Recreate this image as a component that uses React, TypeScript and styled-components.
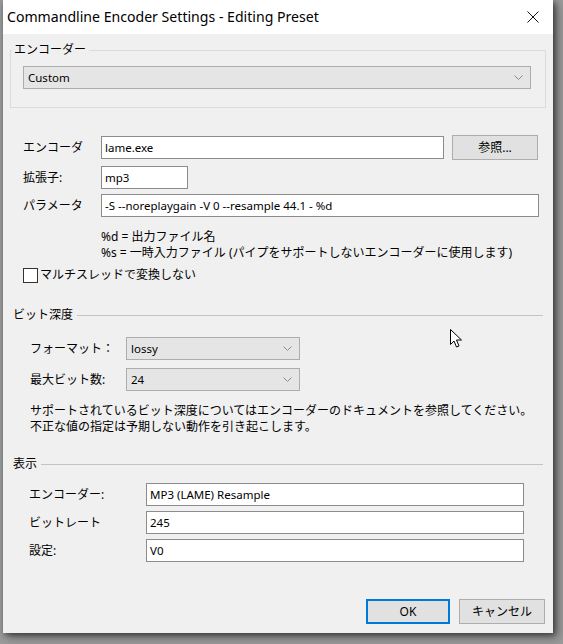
import React from "react";
import styled, { createGlobalStyle } from "styled-components";

const FONT = `"Segoe UI", "Noto Sans", "Noto Sans CJK JP", sans-serif`;

const Global = createGlobalStyle`
  html, body { margin: 0; padding: 0; }
  body {
    background: #9b9b9b;
    width: 563px;
    height: 644px;
    overflow: hidden;
    font-family: ${FONT};
    font-size: 12px;
    color: #000;
  }
`;

const Screen = styled.div`
  width: 563px;
  height: 644px;
  padding-left: 3px;
  box-sizing: border-box;
  background: #9b9b9b;
`;

const Window = styled.div`
  position: relative;
  width: 550px;
  height: 633px;
  background: #f0f0f0;
  display: flex;
  flex-direction: column;
  box-shadow: 2px 2px 6px rgba(0, 0, 0, 0.55), 5px 5px 10px rgba(0, 0, 0, 0.25);
`;

const TitleBar = styled.div`
  height: 34px;
  background: #fff;
  display: flex;
  align-items: center;
  padding-left: 4px;
  padding-bottom: 1px;
  box-sizing: border-box;
`;

const TitleText = styled.div`
  flex: 1;
  font-family: "Segoe UI", "Noto Sans", sans-serif;
  font-size: 14.1px;
  color: #000;
`;

const CloseBtn = styled.div`
  width: 40px;
  height: 34px;
  display: flex;
  align-items: center;
  justify-content: center;
`;

const Content = styled.div`
  flex: 1;
  display: flex;
  flex-direction: column;
  padding: 0 7px 9px 7px;
`;

const GroupBox = styled.div`
  margin-top: 16px;
  height: 58px;
  box-sizing: border-box;
  border: 1px solid #dcdcdc;
  display: flex;
  flex-direction: column;
  padding: 0 14px 0 12px;
`;

const Legend = styled.span`
  align-self: flex-start;
  margin: -9px 0 0 -11px;
  padding: 0 3px 0 2px;
  line-height: 16px;
  background: #f0f0f0;
`;

const Combo = styled.div<{ $w?: number }>`
  height: 23px;
  box-sizing: border-box;
  ${(p) => (p.$w ? `width: ${p.$w}px;` : "")}
  background: #e5e5e5;
  border: 1px solid #adadad;
  display: flex;
  align-items: center;
  padding: 0 7px 0 4px;
  line-height: 16px;
  font-size: 11.5px;
`;

const ComboText = styled.span`
  flex: 1;
`;

const GroupCombo = styled(Combo)`
  margin-top: 8px;
`;

const Row = styled.div<{ $top: number; $indent?: number }>`
  display: flex;
  align-items: center;
  margin-top: ${(p) => p.$top}px;
  margin-left: ${(p) => p.$indent ?? 13}px;
`;

const Label = styled.span<{ $w: number }>`
  width: ${(p) => p.$w}px;
  flex: none;
  line-height: 16px;
`;

const Input = styled.div<{ $w: number }>`
  width: ${(p) => p.$w}px;
  height: 23px;
  box-sizing: border-box;
  background: #fff;
  border: 1px solid #8c8c8c;
  display: flex;
  align-items: center;
  padding-left: 3px;
  line-height: 16px;
  font-size: 11.5px;
  white-space: nowrap;
`;

const Button = styled.div<{ $w: number; $default?: boolean }>`
  width: ${(p) => p.$w}px;
  height: 25px;
  box-sizing: border-box;
  background: #e1e1e1;
  border: ${(p) => (p.$default ? "2px solid #0078d7" : "1px solid #adadad")};
  display: flex;
  align-items: center;
  justify-content: center;
  line-height: 16px;
`;

const BrowseButton = styled(Button)`
  margin-left: 8px;
`;

const Help = styled.div<{ $top: number; $indent: number }>`
  margin-top: ${(p) => p.$top}px;
  margin-left: ${(p) => p.$indent}px;
  line-height: 16px;
  white-space: nowrap;
`;

const CheckRow = styled.label`
  display: flex;
  align-items: center;
  margin-top: 6px;
  margin-left: 13px;
  line-height: 16px;
`;

const CheckBox = styled.span`
  width: 13px;
  height: 13px;
  border: 1px solid #333;
  background: #fff;
  margin-right: 2px;
`;

const Separator = styled.div<{ $top: number }>`
  display: flex;
  align-items: center;
  margin-top: ${(p) => p.$top}px;
  margin-left: 3px;
  margin-right: 3px;
  line-height: 16px;
  &::after {
    content: "";
    flex: 1;
    height: 1px;
    background: #c4c4c4;
    margin-left: 4px;
  }
`;

const Buttons = styled.div`
  margin-top: auto;
  display: flex;
  justify-content: flex-end;
  gap: 9px;
  padding-right: 1px;
`;

const Cursor = styled.svg`
  position: absolute;
  left: 447px;
  top: 329px;
`;

const Chevron = () => (
  <svg width="9" height="5" viewBox="0 0 9 5">
    <path d="M0.5 0.5 L4.5 4.5 L8.5 0.5" fill="none" stroke="#8a8a8a" strokeWidth="1" />
  </svg>
);

export default function App() {
  return (
    <>
      <Global />
      <Screen>
        <Window>
          <TitleBar>
            <TitleText>Commandline Encoder Settings - Editing Preset</TitleText>
            <CloseBtn>
              <svg width="12" height="12" viewBox="0 0 12 12">
                <path d="M0.5 0.5 L11.5 11.5 M11.5 0.5 L0.5 11.5" stroke="#111" strokeWidth="1" />
              </svg>
            </CloseBtn>
          </TitleBar>
          <Content>
            <GroupBox>
              <Legend>エンコーダー</Legend>
              <GroupCombo>
                <ComboText>Custom</ComboText>
                <Chevron />
              </GroupCombo>
            </GroupBox>

            <Row $top={27}>
              <Label $w={78}>エンコーダ</Label>
              <Input $w={343}>lame.exe</Input>
              <BrowseButton $w={86}>参照...</BrowseButton>
            </Row>
            <Row $top={6}>
              <Label $w={78}>拡張子:</Label>
              <Input $w={87}>mp3</Input>
            </Row>
            <Row $top={5}>
              <Label $w={78}>パラメータ</Label>
              <Input $w={438}>-S --noreplaygain -V 0 --resample 44.1 - %d</Input>
            </Row>
            <Help $top={12} $indent={91}>
              %d = 出力ファイル名
              <br />
              %s = 一時入力ファイル (パイプをサポートしないエンコーダーに使用します)
            </Help>
            <CheckRow>
              <CheckBox />
              マルチスレッドで変換しない
            </CheckRow>

            <Separator $top={24}>ビット深度</Separator>
            <Row $top={14} $indent={20}>
              <Label $w={96}>フォーマット：</Label>
              <Combo $w={174}>
                <ComboText>lossy</ComboText>
                <Chevron />
              </Combo>
            </Row>
            <Row $top={8} $indent={20}>
              <Label $w={96}>最大ビット数:</Label>
              <Combo $w={174}>
                <ComboText>24</ComboText>
                <Chevron />
              </Combo>
            </Row>
            <Help $top={12} $indent={20}>
              サポートされているビット深度についてはエンコーダーのドキュメントを参照してください。
              <br />
              不正な値の指定は予期しない動作を引き起こします。
            </Help>

            <Separator $top={21}>表示</Separator>
            <Row $top={11} $indent={19}>
              <Label $w={117}>エンコーダー:</Label>
              <Input $w={378}>MP3 (LAME) Resample</Input>
            </Row>
            <Row $top={5} $indent={19}>
              <Label $w={117}>ビットレート</Label>
              <Input $w={378}>245</Input>
            </Row>
            <Row $top={5} $indent={19}>
              <Label $w={117}>設定:</Label>
              <Input $w={378}>V0</Input>
            </Row>

            <Buttons>
              <Button $w={84} $default>OK</Button>
              <Button $w={86}>キャンセル</Button>
            </Buttons>
          </Content>
          <Cursor width="12" height="19" viewBox="0 0 12 19">
            <path
              d="M0.5 0.5 L0.5 15.5 L4 12 L6.5 18 L9 17 L6.5 11 L11.5 11 Z"
              fill="#fff"
              stroke="#000"
              strokeWidth="1"
              strokeLinejoin="miter"
            />
          </Cursor>
        </Window>
      </Screen>
    </>
  );
}
